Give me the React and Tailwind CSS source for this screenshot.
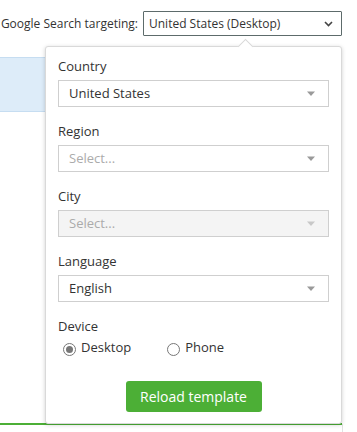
import React from "react";

const font = { fontFamily: '"Open Sans", "Noto Sans", sans-serif' };

function Caret({ light }) {
  return (
    <svg width="10" height="6" viewBox="0 0 10 6" className="shrink-0">
      <path d="M1 0.5 L9 0.5 L5 5 Z" fill={light ? "#c8c8c8" : "#9a9a9a"} />
    </svg>
  );
}

function Field({ label, value, placeholder, disabled }) {
  return (
    <div className="flex flex-col">
      <label className="text-[13px] leading-4 text-[#333]">{label}</label>
      <div
        className={`mt-[6px] h-[27px] border border-[#cfcfcf] pl-[10px] pr-[12px] flex items-center justify-between ${
          disabled ? "bg-[#f4f4f4]" : "bg-white"
        }`}
      >
        <span className={`text-[13px] ${value ? "text-[#333]" : "text-[#ababab]"}`}>
          {value || placeholder}
        </span>
        <Caret light={disabled} />
      </div>
    </div>
  );
}

function Radio({ checked, label }) {
  return (
    <label className="flex items-center gap-[5px]">
      <span className="w-[13px] h-[13px] rounded-full border border-[#777] bg-white flex items-center justify-center">
        {checked && <span className="w-[7px] h-[7px] rounded-full bg-[#777]" />}
      </span>
      <span className="text-[13px] text-[#333] -mt-[4px]">{label}</span>
    </label>
  );
}

export default function App() {
  return (
    <div className="relative w-[357px] h-[432px] bg-white overflow-hidden" style={font}>
      <div className="flex items-center justify-end pr-[15px] pt-[11px] gap-[5px]">
        <span className="text-[12px] text-[#333]">Google Search targeting:</span>
        <div className="w-[199px] h-[25px] border border-[#5d6b6b] rounded-[1px] flex items-center justify-between pl-[5px] pr-[8px]">
          <span className="text-[12px] text-[#333]">United States (Desktop)</span>
          <svg width="9" height="6" viewBox="0 0 9 6">
            <path d="M1 1 L4.5 4.5 L8 1" stroke="#444" strokeWidth="1.6" fill="none" />
          </svg>
        </div>
      </div>

      <div className="mt-[21px] h-[55px] w-[60px] bg-[#ddecf9] border-y border-[#c6ddf1]" />
      <div className="absolute left-0 top-[423px] w-[342px] h-[2px] bg-[#4caf36]" />
      <div className="absolute left-[342px] top-[424px] w-px h-[8px] bg-[#e2e2e2]" />

      <div className="absolute left-[45px] top-[46px] w-[297px] h-[378px] bg-white border border-[#d9d9d9] rounded-[3px] shadow-[0_1px_4px_rgba(0,0,0,0.18)]">
        <div className="absolute left-[194px] -top-[6px] w-[11px] h-[11px] rotate-45 bg-white border-l border-t border-[#d9d9d9]" />
        <div className="relative pt-[11px] px-[12px] flex flex-col gap-[16px]">
          <Field label="Country" value="United States" />
          <Field label="Region" placeholder="Select..." />
          <Field label="City" placeholder="Select..." disabled />
          <Field label="Language" value="English" />
          <div className="flex flex-col">
            <span className="text-[13px] leading-4 text-[#333]">Device</span>
            <div className="flex items-center gap-[36px] pl-[5px] mt-[8px]">
              <Radio checked label="Desktop" />
              <Radio label="Phone" />
            </div>
          </div>
        </div>
        <div className="flex justify-center mt-[23px]">
          <button className="w-[136px] h-[31px] rounded-[3px] bg-[#4caf36] text-white text-[14px] font-medium">
            Reload template
          </button>
        </div>
      </div>
    </div>
  );
}
